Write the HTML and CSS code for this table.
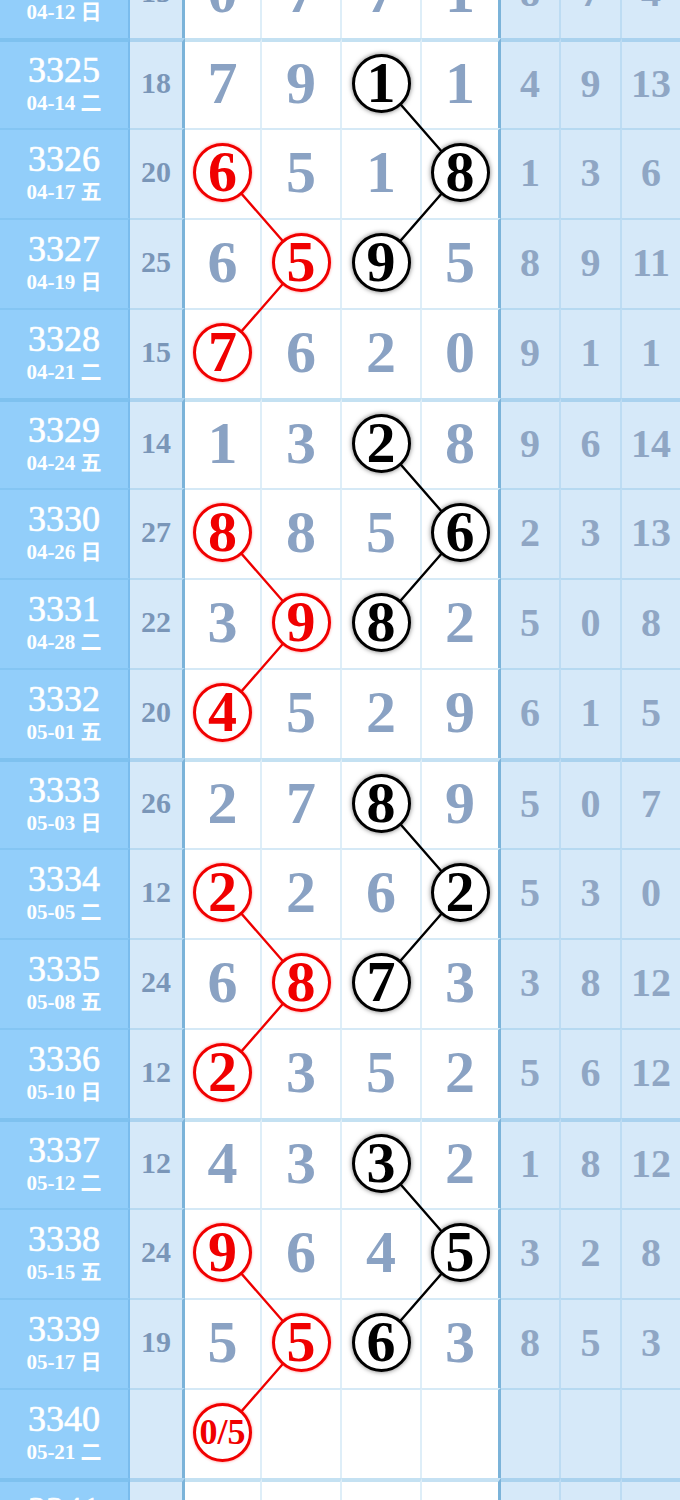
FILE: index.html
```html
<!DOCTYPE html>
<html lang="zh">
<head>
<meta charset="utf-8">
<title>走势图</title>
<link rel="stylesheet" href="styles.css">
</head>
<body>
<div class="board">
  <svg class="links" width="680" height="1620" viewBox="0 0 680 1620">
    <g class="lk-blk">
      <polyline points="381.5,134.5 460,224.5 381.5,314.5"/>
      <polyline points="381.5,494.5 460,584.5 381.5,674.5"/>
      <polyline points="381.5,854.5 460,944.5 381.5,1034.5"/>
      <polyline points="381.5,1214.5 460,1304.5 381.5,1394.5"/>
    </g>
    <g class="lk-red">
      <polyline points="223,224.5 301.5,314.5 223,404.5"/>
      <polyline points="223,584.5 301.5,674.5 223,764.5"/>
      <polyline points="223,944.5 301.5,1034.5 223,1124.5"/>
      <polyline points="223,1304.5 301.5,1394.5 223,1484.5"/>
    </g>
  </svg>

  <div class="row">
    <div class="cell date"><span class="d1">3324</span><span class="d2">04-12 日</span></div>
    <div class="cell sum">15</div>
    <div class="cell num">0</div><div class="cell num">7</div><div class="cell num">7</div><div class="cell num last">1</div>
    <div class="cell rt">8</div><div class="cell rt">7</div><div class="cell rt">4</div>
  </div>

  <div class="row g">
    <div class="cell date"><span class="d1">3325</span><span class="d2">04-14 二</span></div>
    <div class="cell sum">18</div>
    <div class="cell num">7</div><div class="cell num">9</div><div class="cell num"><span class="ball blk">1</span></div><div class="cell num last">1</div>
    <div class="cell rt">4</div><div class="cell rt">9</div><div class="cell rt">13</div>
  </div>
  <div class="row">
    <div class="cell date"><span class="d1">3326</span><span class="d2">04-17 五</span></div>
    <div class="cell sum">20</div>
    <div class="cell num"><span class="ball red">6</span></div><div class="cell num">5</div><div class="cell num">1</div><div class="cell num last"><span class="ball blk">8</span></div>
    <div class="cell rt">1</div><div class="cell rt">3</div><div class="cell rt">6</div>
  </div>
  <div class="row">
    <div class="cell date"><span class="d1">3327</span><span class="d2">04-19 日</span></div>
    <div class="cell sum">25</div>
    <div class="cell num">6</div><div class="cell num"><span class="ball red">5</span></div><div class="cell num"><span class="ball blk">9</span></div><div class="cell num last">5</div>
    <div class="cell rt">8</div><div class="cell rt">9</div><div class="cell rt">11</div>
  </div>
  <div class="row">
    <div class="cell date"><span class="d1">3328</span><span class="d2">04-21 二</span></div>
    <div class="cell sum">15</div>
    <div class="cell num"><span class="ball red">7</span></div><div class="cell num">6</div><div class="cell num">2</div><div class="cell num last">0</div>
    <div class="cell rt">9</div><div class="cell rt">1</div><div class="cell rt">1</div>
  </div>

  <div class="row g">
    <div class="cell date"><span class="d1">3329</span><span class="d2">04-24 五</span></div>
    <div class="cell sum">14</div>
    <div class="cell num">1</div><div class="cell num">3</div><div class="cell num"><span class="ball blk">2</span></div><div class="cell num last">8</div>
    <div class="cell rt">9</div><div class="cell rt">6</div><div class="cell rt">14</div>
  </div>
  <div class="row">
    <div class="cell date"><span class="d1">3330</span><span class="d2">04-26 日</span></div>
    <div class="cell sum">27</div>
    <div class="cell num"><span class="ball red">8</span></div><div class="cell num">8</div><div class="cell num">5</div><div class="cell num last"><span class="ball blk">6</span></div>
    <div class="cell rt">2</div><div class="cell rt">3</div><div class="cell rt">13</div>
  </div>
  <div class="row">
    <div class="cell date"><span class="d1">3331</span><span class="d2">04-28 二</span></div>
    <div class="cell sum">22</div>
    <div class="cell num">3</div><div class="cell num"><span class="ball red">9</span></div><div class="cell num"><span class="ball blk">8</span></div><div class="cell num last">2</div>
    <div class="cell rt">5</div><div class="cell rt">0</div><div class="cell rt">8</div>
  </div>
  <div class="row">
    <div class="cell date"><span class="d1">3332</span><span class="d2">05-01 五</span></div>
    <div class="cell sum">20</div>
    <div class="cell num"><span class="ball red">4</span></div><div class="cell num">5</div><div class="cell num">2</div><div class="cell num last">9</div>
    <div class="cell rt">6</div><div class="cell rt">1</div><div class="cell rt">5</div>
  </div>

  <div class="row g">
    <div class="cell date"><span class="d1">3333</span><span class="d2">05-03 日</span></div>
    <div class="cell sum">26</div>
    <div class="cell num">2</div><div class="cell num">7</div><div class="cell num"><span class="ball blk">8</span></div><div class="cell num last">9</div>
    <div class="cell rt">5</div><div class="cell rt">0</div><div class="cell rt">7</div>
  </div>
  <div class="row">
    <div class="cell date"><span class="d1">3334</span><span class="d2">05-05 二</span></div>
    <div class="cell sum">12</div>
    <div class="cell num"><span class="ball red">2</span></div><div class="cell num">2</div><div class="cell num">6</div><div class="cell num last"><span class="ball blk">2</span></div>
    <div class="cell rt">5</div><div class="cell rt">3</div><div class="cell rt">0</div>
  </div>
  <div class="row">
    <div class="cell date"><span class="d1">3335</span><span class="d2">05-08 五</span></div>
    <div class="cell sum">24</div>
    <div class="cell num">6</div><div class="cell num"><span class="ball red">8</span></div><div class="cell num"><span class="ball blk">7</span></div><div class="cell num last">3</div>
    <div class="cell rt">3</div><div class="cell rt">8</div><div class="cell rt">12</div>
  </div>
  <div class="row">
    <div class="cell date"><span class="d1">3336</span><span class="d2">05-10 日</span></div>
    <div class="cell sum">12</div>
    <div class="cell num"><span class="ball red">2</span></div><div class="cell num">3</div><div class="cell num">5</div><div class="cell num last">2</div>
    <div class="cell rt">5</div><div class="cell rt">6</div><div class="cell rt">12</div>
  </div>

  <div class="row g">
    <div class="cell date"><span class="d1">3337</span><span class="d2">05-12 二</span></div>
    <div class="cell sum">12</div>
    <div class="cell num">4</div><div class="cell num">3</div><div class="cell num"><span class="ball blk">3</span></div><div class="cell num last">2</div>
    <div class="cell rt">1</div><div class="cell rt">8</div><div class="cell rt">12</div>
  </div>
  <div class="row">
    <div class="cell date"><span class="d1">3338</span><span class="d2">05-15 五</span></div>
    <div class="cell sum">24</div>
    <div class="cell num"><span class="ball red">9</span></div><div class="cell num">6</div><div class="cell num">4</div><div class="cell num last"><span class="ball blk">5</span></div>
    <div class="cell rt">3</div><div class="cell rt">2</div><div class="cell rt">8</div>
  </div>
  <div class="row">
    <div class="cell date"><span class="d1">3339</span><span class="d2">05-17 日</span></div>
    <div class="cell sum">19</div>
    <div class="cell num">5</div><div class="cell num"><span class="ball red">5</span></div><div class="cell num"><span class="ball blk">6</span></div><div class="cell num last">3</div>
    <div class="cell rt">8</div><div class="cell rt">5</div><div class="cell rt">3</div>
  </div>
  <div class="row">
    <div class="cell date"><span class="d1">3340</span><span class="d2">05-21 二</span></div>
    <div class="cell sum"></div>
    <div class="cell num"><span class="ball red small">0/5</span></div><div class="cell num"></div><div class="cell num"></div><div class="cell num last"></div>
    <div class="cell rt"></div><div class="cell rt"></div><div class="cell rt"></div>
  </div>

  <div class="row g">
    <div class="cell date"><span class="d1">3341</span><span class="d2">05-24 五</span></div>
    <div class="cell sum"></div>
    <div class="cell num"></div><div class="cell num"></div><div class="cell num"></div><div class="cell num last"></div>
    <div class="cell rt"></div><div class="cell rt"></div><div class="cell rt"></div>
  </div>
</div>
</body>
</html>
```

FILE: styles.css
```css
html, body {
  margin: 0;
  padding: 0;
  background: #ffffff;
}

body {
  width: 680px;
  height: 1500px;
  overflow: hidden;
}

.board {
  position: relative;
  margin-top: -52px;
  font-family: "Liberation Serif", "Noto Sans CJK SC", serif;
}

.links {
  position: absolute;
  top: 0;
  left: 0;
  z-index: 1;
  pointer-events: none;
}

.links polyline {
  fill: none;
  stroke-width: 2.4;
  stroke-linejoin: round;
}

.lk-blk polyline {
  stroke: #000000;
}

.lk-red polyline {
  stroke: #ee0000;
}

.row {
  display: grid;
  grid-template-columns: 130px 55px 77px 80px 80px 79px 60px 61px 58px;
  height: 90px;
}

.cell {
  box-sizing: border-box;
  height: 90px;
  border-top: 2px solid rgba(90, 170, 220, 0.25);
  border-right: 2px solid rgba(90, 170, 220, 0.2);
  display: flex;
  align-items: center;
  justify-content: center;
  padding-bottom: 4px;
  background: #ffffff;
}

.row.g .cell {
  border-top-width: 4px;
  border-top-color: rgba(90, 170, 220, 0.35);
}

.date {
  background: #92cefa;
  flex-direction: column;
  color: #ffffff;
  border-right-color: rgba(70, 150, 210, 0.3);
}

.d1 {
  font-size: 36px;
  line-height: 34px;
  -webkit-text-stroke: 0.6px #ffffff;
}

.d2 {
  font-size: 21px;
  font-weight: bold;
  line-height: 22px;
  margin-top: 5px;
  white-space: nowrap;
}

.sum {
  background: #d6e9f9;
  border-right: 3px solid #7bb3d9;
  color: #7a96b8;
  font-size: 30px;
  font-weight: bold;
}

.num {
  font-size: 60px;
  font-weight: bold;
  line-height: 1;
  color: #8aa2c3;
}

.num.last {
  border-right: 3px solid #7bb3d9;
}

.rt {
  background: #d6e9f9;
  color: #8fa6c4;
  font-size: 40px;
  font-weight: bold;
}

.rt:last-child {
  border-right: 0;
}

.ball {
  position: relative;
  z-index: 2;
  box-sizing: border-box;
  width: 59px;
  height: 59px;
  border: 3px solid;
  border-radius: 50%;
  background: #ffffff;
  display: flex;
  align-items: center;
  justify-content: center;
  font-size: 58px;
  line-height: 1;
  font-weight: bold;
}

.ball.red {
  color: #f00000;
  border-color: #f00000;
  box-shadow: 0 0 3px rgba(255, 0, 0, 0.45);
}

.ball.blk {
  color: #000000;
  border-color: #000000;
  box-shadow: 0 0 5px rgba(0, 0, 0, 0.55);
}

.ball.small {
  font-size: 36px;
}
```
